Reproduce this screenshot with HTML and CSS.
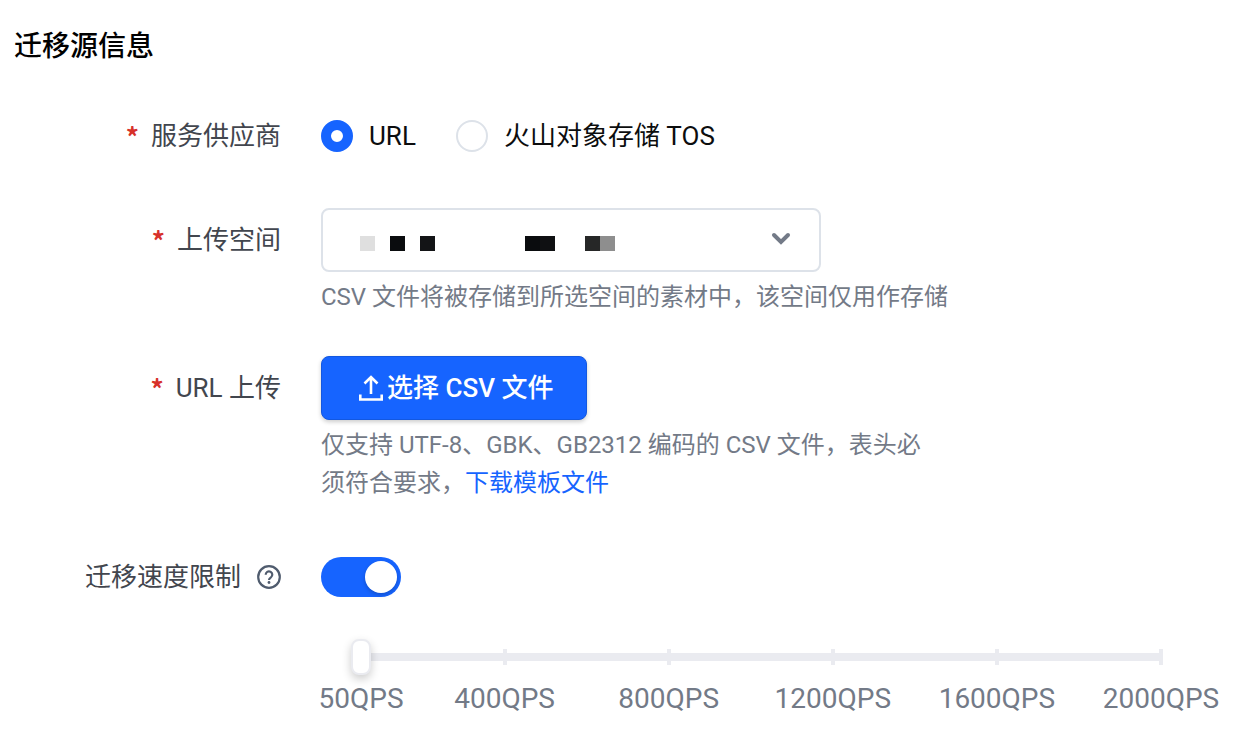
FILE: index.html
```html
<!DOCTYPE html>
<html lang="zh-CN">
<head>
    <meta charset="UTF-8">
    <meta name="viewport" content="width=device-width, initial-scale=1.0">
    <title>迁移源信息</title>
    <link rel="stylesheet" href="styles.css">
</head>
<body>

    <h1>迁移源信息</h1>
    <form class="form">
        <div class="row">
            <div class="label" id="providerLabel"><span class="required">*</span>服务供应商</div>
            <div class="field radios" role="radiogroup" aria-labelledby="providerLabel">
                <label class="radio"><input type="radio" name="provider" value="url" checked>URL</label>
                <label class="radio"><input type="radio" name="provider" value="tos">火山对象存储 TOS</label>
            </div>
        </div>

        <div class="row">
            <label class="label" for="space"><span class="required">*</span>上传空间</label>
            <div class="field">
                <div class="select-box">
                    <select id="space">
                        <option value=""></option>
                    </select>
                    <!-- masked space name -->
                    <svg class="mask" width="255" height="15" viewBox="0 0 255 15" shape-rendering="crispEdges" aria-hidden="true">
                        <rect x="0" width="15" height="15" fill="#dfdfdf"/>
                        <rect x="30" width="15" height="15" fill="#0a0c0e"/>
                        <rect x="60" width="15" height="15" fill="#131416"/>
                        <rect x="165" width="15" height="15" fill="#0a0c0e"/>
                        <rect x="180" width="15" height="15" fill="#0f1012"/>
                        <rect x="225" width="15" height="15" fill="#262727"/>
                        <rect x="240" width="15" height="15" fill="#8e8e8e"/>
                    </svg>
                    <svg class="arrow" width="20" height="14" viewBox="0 0 20 14" aria-hidden="true">
                        <path d="M3 3l7 7 7-7" fill="none" stroke="#737a87" stroke-width="4" stroke-linecap="round"/>
                    </svg>
                </div>
                <p class="help">CSV 文件将被存储到所选空间的素材中，该空间仅用作存储</p>
            </div>
        </div>

        <div class="row">
            <label class="label" for="upload"><span class="required">*</span>URL 上传</label>
            <div class="field">
                <button type="button" class="upload" id="upload">
                    <svg width="24" height="26" viewBox="0 0 24 26" fill="none" stroke="#fff" stroke-width="2.6" aria-hidden="true">
                        <path d="M12 19V2M5.5 8.5L12 2l6.500 6.500M1.300 19.500v5h21.400v-5"/>
                    </svg>
                    选择 CSV 文件
                </button>
                <p class="help narrow">仅支持 UTF-8、GBK、GB2312 编码的 CSV 文件，表头必须符合要求，<a href="#">下载模板文件</a></p>
            </div>
        </div>

        <div class="row speed">
            <label class="label" for="limit">迁移速度限制
                <svg class="question" width="24" height="24" viewBox="0 0 24 24" fill="none" stroke="#505c6e" stroke-width="2.2" aria-hidden="true">
                    <circle cx="12" cy="12" r="10.800"/>
                    <path d="M8.700 9.800a3.300 3.300 0 1 1 5.200 2.600c-1.200.8-1.900 1.300-1.900 2.600"/>
                    <circle cx="12" cy="17.500" r="1.400" fill="#505c6e" stroke="none"/>
                </svg>
            </label>
            <div class="field">
                <input type="checkbox" class="switch" id="limit" role="switch" checked>
            </div>
        </div>

        <div class="slider">
            <input type="range" min="50" max="2000" value="50" aria-label="迁移速度限制">
            <div class="marks">
                <span>50QPS</span>
                <span>400QPS</span>
                <span>800QPS</span>
                <span>1200QPS</span>
                <span>1600QPS</span>
                <span>2000QPS</span>
            </div>
        </div>
    </form>

</body>
</html>
```

FILE: styles.css
```css
* {
    box-sizing: border-box;
}
body {
    font-family: Roboto, "Noto Sans CJK SC", sans-serif;
    font-size: 26px;
    line-height: 38px;
    background-color: #fff;
    margin: 0;
    padding: 27px 14px;
    color: #0c0d0e;
}
h1 {
    font-size: 28px;
    font-weight: 500;
    line-height: 40px;
    margin: 0 0 37px;
    color: #000;
}
input, select, button {
    font: inherit;
    margin: 0;
}
.form {
    display: flex;
    flex-direction: column;
    gap: 40px;
}
.row {
    display: grid;
    grid-template-columns: 267px 1fr;
    column-gap: 40px;
}
.label {
    display: flex;
    justify-content: flex-end;
    align-items: center;
    height: 64px;
    color: #42464e;
}
.required {
    margin-right: 12px;
    color: #d7312a;
    font-family: "Noto Sans CJK SC", sans-serif;
    font-weight: 700;
}
.radios {
    display: flex;
    align-items: center;
    gap: 40px;
}
.radio {
    display: flex;
    align-items: center;
    gap: 16px;
}
.radio input {
    appearance: none;
    width: 32px;
    height: 32px;
    border: 2px solid #dde2e9;
    border-radius: 50%;
    background-color: #fff;
}
.radio input:checked {
    border: 10px solid #1664ff;
}
.select-box {
    position: relative;
    max-width: 500px;
}
.select-box select {
    appearance: none;
    display: block;
    width: 100%;
    height: 64px;
    padding: 0 60px 0 38px;
    border: 2px solid #dde2e9;
    border-radius: 8px;
    background-color: #fff;
}
.mask, .arrow {
    position: absolute;
    pointer-events: none;
}
.mask {
    left: 39px;
    top: 28px;
}
.arrow {
    right: 30px;
    top: 24px;
}
.help {
    margin: 6px 0 0;
    font-size: 24px;
    line-height: 38px;
    color: #737a87;
}
.narrow {
    max-width: 610px;
}
.help a {
    color: #1664ff;
    text-decoration: none;
}
.upload {
    display: flex;
    align-items: center;
    gap: 4px;
    height: 64px;
    padding: 0 33px 0 37px;
    border: 1px solid #1358e0;
    border-radius: 8px;
    background-color: #1664ff;
    box-shadow: 0 2px 4px rgba(0, 0, 0, 0.2);
    color: #fff;
    font-weight: 500;
}
.speed {
    margin-top: 3px;
}
.question {
    margin-left: 16px;
}
.speed .field {
    display: flex;
    align-items: center;
}
.switch {
    appearance: none;
    display: flex;
    width: 80px;
    height: 40px;
    padding: 4px;
    border-radius: 20px;
    background-color: #1664ff;
    justify-content: flex-end;
}
.switch::before {
    content: "";
    width: 32px;
    height: 32px;
    border-radius: 50%;
    background-color: #fff;
    box-shadow: 0 2px 4px rgba(0, 0, 0, 0.2);
}
.switch:not(:checked) {
    background-color: #c7ccd6;
    justify-content: flex-start;
}
.slider {
    display: grid;
    margin: -10px 67px 0 337px;
}
.slider input, .marks {
    grid-area: 1 / 1;
}
.slider input {
    appearance: none;
    z-index: 1;
    width: 100%;
    height: 36px;
    background: none;
}
.slider input::-webkit-slider-thumb {
    appearance: none;
    width: 20px;
    height: 36px;
    border: 2px solid #eaebf0;
    border-radius: 8px;
    background-color: #fff;
    box-shadow: 0 4px 10px rgba(0, 0, 0, 0.2);
}
/* columns follow the distance between the values */
.marks {
    display: grid;
    grid-template-columns: 350fr 400fr 400fr 400fr 400fr 0;
    margin: 0 10px;
    padding-top: 10px;
    background: linear-gradient(#eaebf0, #eaebf0) 0 14px / 100% 8px no-repeat;
    color: #737a87;
    font-size: 28px;
    line-height: 38px;
}
.marks span {
    display: flex;
    flex-direction: column;
    align-items: center;
    gap: 15px;
    width: 0;
    white-space: nowrap;
}
.marks span::before {
    content: "";
    flex: none;
    width: 4px;
    height: 16px;
    background-color: #eaebf0;
}
```
